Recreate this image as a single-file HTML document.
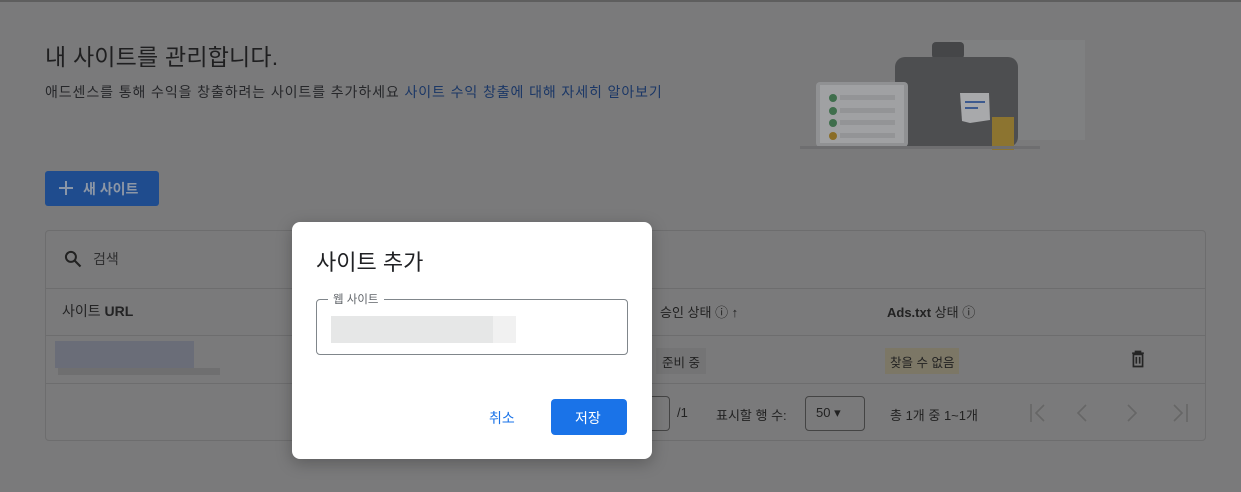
<!DOCTYPE html>
<html><head><meta charset="utf-8"><style>
*{box-sizing:border-box;margin:0;padding:0}
body{width:1241px;height:492px;overflow:hidden;background:#7a7a7b;font-family:"Liberation Sans","Noto Sans CJK KR",sans-serif;color:#1e1e1e;position:relative}
.a{position:absolute}
.t{white-space:nowrap}
</style></head><body>
<div class="a" style="left:0;top:0;width:1241px;height:2px;background:#5e5e5e"></div>
<div class="a t" style="left:45px;top:38px;font-size:23px;letter-spacing:0.2px;color:#1f1f20">내 사이트를 관리합니다.</div>
<div class="a t" style="left:45px;top:82px;font-size:14px;letter-spacing:0.9px;color:#26272a">애드센스를 통해 수익을 창출하려는 사이트를 추가하세요 <span style="color:#1b3766">사이트 수익 창출에 대해 자세히 알아보기</span></div>
<svg class="a" style="left:800px;top:25px" width="300" height="125" viewBox="0 0 300 125">
<rect x="90" y="55" width="45" height="60" fill="#7e7e7f"/>
<rect x="150" y="15" width="135" height="100" fill="#7f8081"/>
<rect x="132" y="17" width="32" height="17" rx="4" fill="#454648"/>
<rect x="95" y="32" width="123" height="90" rx="10" fill="#4d4e50"/>
<polygon points="160,68 189,68 190,95 170,98 162,96" fill="#a8a9ab"/>
<rect x="165" y="76" width="20" height="2" fill="#3d5a8f"/><rect x="165" y="82" width="13" height="2" fill="#3d5a8f"/>
<rect x="16" y="57" width="92" height="65" rx="4" fill="#909193"/>
<rect x="20" y="60" width="84" height="58" fill="#a0a1a3"/>
<circle cx="33" cy="73" r="4" fill="#3f6e4c"/><circle cx="33" cy="86" r="4" fill="#3f6e4c"/><circle cx="33" cy="98" r="4" fill="#3f6e4c"/><circle cx="33" cy="111" r="4" fill="#8a6d27"/>
<rect x="40" y="70" width="55" height="5" fill="#939496"/><rect x="40" y="83" width="55" height="5" fill="#939496"/><rect x="40" y="95" width="55" height="5" fill="#939496"/><rect x="40" y="108" width="55" height="5" fill="#939496"/>
<rect x="192" y="92" width="22" height="33" fill="#8c7430"/>
<rect x="0" y="121" width="240" height="3" fill="#6e6e70"/>
</svg>
<div class="a" style="left:45px;top:171px;width:114px;height:35px;background:#1f4c8e;border-radius:3px"></div>
<svg class="a" style="left:59px;top:181px" width="14" height="14" viewBox="0 0 14 14"><path d="M7 0v14M0 7h14" stroke="#8a96a8" stroke-width="2"/></svg>
<div class="a t" style="left:83px;top:179px;font-size:14px;font-weight:bold;color:#8d97a6">새 사이트</div>
<div class="a" style="left:45px;top:230px;width:1161px;height:211px;border:1px solid #6d6d6e;border-radius:4px"></div>
<div class="a" style="left:46px;top:288px;width:1159px;height:1px;background:#6d6d6e"></div>
<div class="a" style="left:46px;top:335px;width:1159px;height:1px;background:#6d6d6e"></div>
<div class="a" style="left:46px;top:383px;width:1159px;height:1px;background:#6d6d6e"></div>
<svg class="a" style="left:63px;top:249px" width="20" height="20" viewBox="0 0 24 24"><circle cx="9.5" cy="9.5" r="6" fill="none" stroke="#222" stroke-width="2.4"/><path d="M14 14l7 7" stroke="#222" stroke-width="2.6"/></svg>
<div class="a t" style="left:93px;top:249px;font-size:14px;color:#2f2f30">검색</div>
<div class="a t" style="left:62px;top:301px;font-size:14px;color:#232324">사이트 <b>URL</b></div>
<div class="a" style="left:55px;top:341px;width:139px;height:27px;background:#6a6d78"></div>
<div class="a" style="left:58px;top:368px;width:162px;height:7px;background:#6f6f70"></div>
<div class="a t" style="left:660px;top:302px;font-size:13px;color:#222">승인 상태 ⓘ ↑</div>
<div class="a t" style="left:887px;top:302px;font-size:13px;color:#222;font-weight:bold">Ads.txt <span style="font-weight:normal">상태 ⓘ</span></div>
<div class="a t" style="left:656px;top:348px;height:26px;padding:4px 6px;font-size:12.5px;background:#747475;color:#222">준비 중</div>
<div class="a t" style="left:885px;top:348px;height:26px;padding:4px 5px;font-size:12.5px;background:#7c7766;color:#222">찾을 수 없음</div>
<svg class="a" style="left:1128px;top:349px" width="20" height="20" viewBox="0 0 24 24"><path d="M5 5h14M9 5V3h6v2M6.5 6.5h11V21h-11z M10 9.5v8M14 9.5v8" fill="none" stroke="#252525" stroke-width="2"/></svg>
<div class="a" style="left:640px;top:396px;width:30px;height:35px;border:1px solid #444;border-left:none;border-radius:0 4px 4px 0"></div>
<div class="a t" style="left:677px;top:405px;font-size:13px;color:#222">/1</div>
<div class="a t" style="left:716px;top:405px;font-size:13px;color:#222">표시할 행 수:</div>
<div class="a" style="left:805px;top:396px;width:60px;height:35px;border:1px solid #444;border-radius:4px"></div>
<div class="a t" style="left:816px;top:405px;font-size:13px;color:#222">50 ▾</div>
<div class="a t" style="left:890px;top:405px;font-size:13px;color:#222">총 1개 중 1~1개</div>
<svg class="a" style="left:1025px;top:402px" width="170" height="22" viewBox="0 0 170 22"><g fill="none" stroke="#666" stroke-width="1.6"><path d="M6 2v18M19 3l-8 8 8 8"/><path d="M61 3l-8 8 8 8"/><path d="M103 3l8 8-8 8"/><path d="M149 3l8 8-8 8M162 2v18"/></g></svg>
<div class="a" style="left:292px;top:222px;width:360px;height:237px;background:#fff;border-radius:8px;box-shadow:0 4px 16px rgba(0,0,0,0.25)"></div>
<div class="a t" style="left:316px;top:245px;font-size:22px;color:#202124">사이트 추가</div>
<div class="a" style="left:316px;top:299px;width:312px;height:56px;border:1px solid #80868b;border-radius:4px"></div>
<div class="a t" style="left:328px;top:291px;padding:0 5px;background:#fff;font-size:11.5px;color:#5f6368">웹 사이트</div>
<div class="a" style="left:331px;top:316px;width:162px;height:27px;background:#e6e7e7"></div>
<div class="a" style="left:493px;top:316px;width:23px;height:27px;background:#f1f1f1"></div>
<div class="a t" style="left:489px;top:408px;font-size:14px;color:#1a73e8">취소</div>
<div class="a" style="left:551px;top:399px;width:76px;height:36px;background:#1a73e8;border-radius:4px"></div>
<div class="a t" style="left:575px;top:408px;font-size:14px;color:#fff">저장</div>
</body></html>
